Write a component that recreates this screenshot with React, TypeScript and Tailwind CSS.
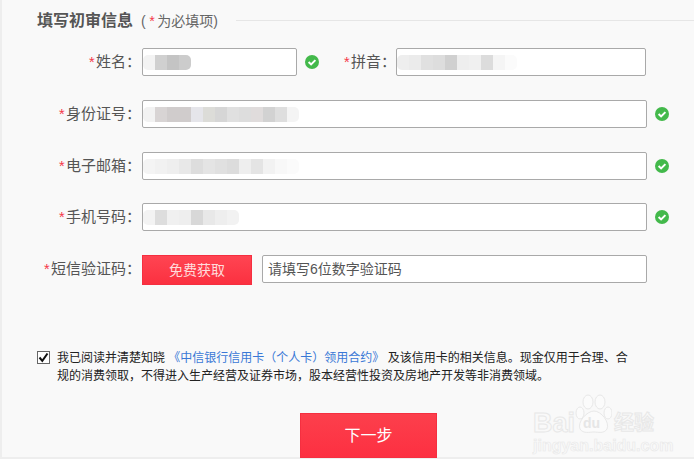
const cjk = "font-['Liberation_Sans','Noto_Sans_CJK_SC',sans-serif]";

const Check = () => (
  <svg width="14" height="14" viewBox="0 0 14 14" className="shrink-0">
    <circle cx="7" cy="7" r="7" fill="#43b94b" />
    <path d="M3.6 7 L6.1 9.4 L10.4 5.1" fill="none" stroke="#fff" strokeWidth="2" />
  </svg>
);

const Mosaic = ({ cells }: { cells: string[] }) => (
  <div className="flex h-[15px] overflow-hidden rounded-[5px] blur-[0.5px]">
    {cells.map((c, i) => (
      <div key={i} className="h-full w-3" style={{ backgroundColor: c }} />
    ))}
  </div>
);

const Label = ({ text, className }: { text: string; className: string }) => (
  <label className={`flex shrink-0 justify-end text-[15px] leading-7 text-[#555] ${className}`}>
    <span className="mr-[2px] italic text-[#f5394a]">*</span>
    {text}：
  </label>
);

const Field = ({ className, children }: { className: string; children?: React.ReactNode }) => (
  <div className={`flex h-7 items-center rounded-[2px] border border-[#a9a9a9] bg-white ${className}`}>
    {children}
  </div>
);

const Row = ({ label, cells, className }: { label: string; cells: string[]; className: string }) => (
  <div className={`flex items-center ${className}`}>
    <Label text={label} className="w-[139px]" />
    <Field className="ml-[1px] w-[505px]">
      <Mosaic cells={cells} />
    </Field>
    <div className="ml-2">
      <Check />
    </div>
  </div>
);

export default function App() {
  return (
    <div className={`h-[471px] w-[694px] overflow-hidden bg-white ${cjk}`}>
      <div className="relative h-[459px] border-b-2 border-l-2 border-[#eeeeee] bg-[#f9f9f9]">
        <div className="flex h-[48px] items-center pb-[6px] pl-[35px]">
          <h2 className="text-base font-bold text-[#555]">填写初审信息</h2>
          <span className="ml-[8px] text-sm text-[#666]">
            (<span className="mx-[3px] italic text-[#f5394a]">*</span>为必填项)
          </span>
          <div className="ml-[18px] h-[1px] flex-1 -translate-y-[1px] bg-[#e6e6e6]" />
        </div>

        <div className="flex items-center">
          <Label text="姓名" className="w-[139px]" />
          <Field className="ml-[1px] w-[155px]">
            <Mosaic cells={["#f3f3f3", "#d0d0d0", "#c4c4c4", "#cccccc"]} />
          </Field>
          <div className="ml-2">
            <Check />
          </div>
          <Label text="拼音" className="ml-[21px] w-[56px]" />
          <Field className="w-[250px]">
            <Mosaic cells={["#eeeeee", "#ebebeb", "#e0e0e0", "#dddddd", "#d0d0d0", "#eeeeee", "#f0f0f0", "#dcdcdc", "#f5f5f5", "#fbfbfb"]} />
          </Field>
        </div>

        <Row
          label="身份证号"
          className="mt-6"
          cells={["#f2f2f2", "#d8d4d4", "#d0cccc", "#d0cccc", "#e5e5ea", "#dcdcd8", "#d6d6d6", "#e0e0e0", "#dddddd", "#e0dcdc", "#d2d2d2", "#dedede", "#f4f4f4"]}
        />
        <Row
          label="电子邮箱"
          className="mt-6"
          cells={["#f4f4f4", "#f1f1f1", "#eeeeee", "#e8e8e8", "#dddddd", "#e4e4e4", "#e0e0e0", "#dcdcdc", "#eeeeee", "#e4e4e4", "#f2f2f2", "#f8f8f8", "#fbfbfb"]}
        />
        <Row
          label="手机号码"
          className="mt-[23px]"
          cells={["#f3f3f3", "#dddddd", "#f0f0f0", "#eeeeee", "#d8d8d8", "#e8e8e8", "#eeeeee", "#f2f2f2"]}
        />

        <div className="mt-6 flex items-start">
          <Label text="短信验证码" className="w-[139px]" />
          <button className="ml-[1px] h-[30px] w-[110px] border border-[#f52f40] bg-gradient-to-b from-[#ff4452] to-[#fb3040] text-sm text-[#ffdcdc]">
            免费获取
          </button>
          <Field className="ml-[10px] w-[385px] px-[5px] text-sm text-[#555]">请填写6位数字验证码</Field>
        </div>

        <div className="mt-[64px] flex pl-[35px]">
          <div className="mt-[2px] flex h-[13px] w-[13px] shrink-0 items-center justify-center border border-[#666] bg-white">
            <svg width="11" height="11" viewBox="0 0 11 11">
              <path d="M1.5 5.5 L4.3 8.8 L9.5 1.5" fill="none" stroke="#111" strokeWidth="2" />
            </svg>
          </div>
          <p className="ml-[7px] w-[575px] text-xs leading-[18px] text-[#222]">
            我已阅读并清楚知晓 <a className="text-[#3a78d6]">《中信银行信用卡（个人卡）领用合约》</a> 及该信用卡的相关信息。现金仅用于合理、合规的消费领取，不得进入生产经营及证券市场，股本经营性投资及房地产开发等非消费领域。
          </p>
        </div>

        <div className="mt-[28px] flex pl-[298px]">
          <button className="h-[45px] w-[137px] border border-[#f52f40] bg-gradient-to-b from-[#fc3f4c] to-[#fd2f41] text-base text-white">
            下一步
          </button>
        </div>

        <div className="absolute left-[531px] top-[394px] flex w-[125px] flex-col items-start">
          <div className="flex items-end">
            <span className="text-[27px] font-bold leading-[24px] text-transparent [-webkit-text-stroke:1px_#e8e8e8]">Bai</span>
            <div className="relative">
              <svg width="37" height="41" viewBox="0 0 37 41" fill="#fbfbfb" stroke="#e8e8e8">
                <ellipse cx="13" cy="8" rx="5" ry="7" />
                <ellipse cx="25" cy="8" rx="5" ry="7" />
                <ellipse cx="5" cy="19" rx="4" ry="6" />
                <ellipse cx="33" cy="19" rx="4" ry="6" />
                <path d="M19 17 C26 17 35 28 32 35 C29 40 23 38 19 38 C15 38 8 40 5 35 C2 28 12 17 19 17 Z" />
              </svg>
              <span className="absolute bottom-[4px] left-[8px] text-[14px] font-bold leading-4 text-[#e6e6e6]">du</span>
            </div>
            <span className="ml-[2px] text-[20px] font-bold leading-[24px] text-transparent [-webkit-text-stroke:1px_#e8e8e8]">经验</span>
          </div>
          <span className="mt-[3px] text-base font-bold leading-none text-transparent [-webkit-text-stroke:0.6px_#e8e8e8]">jingyan.baidu.com</span>
        </div>
      </div>
    </div>
  );
}
